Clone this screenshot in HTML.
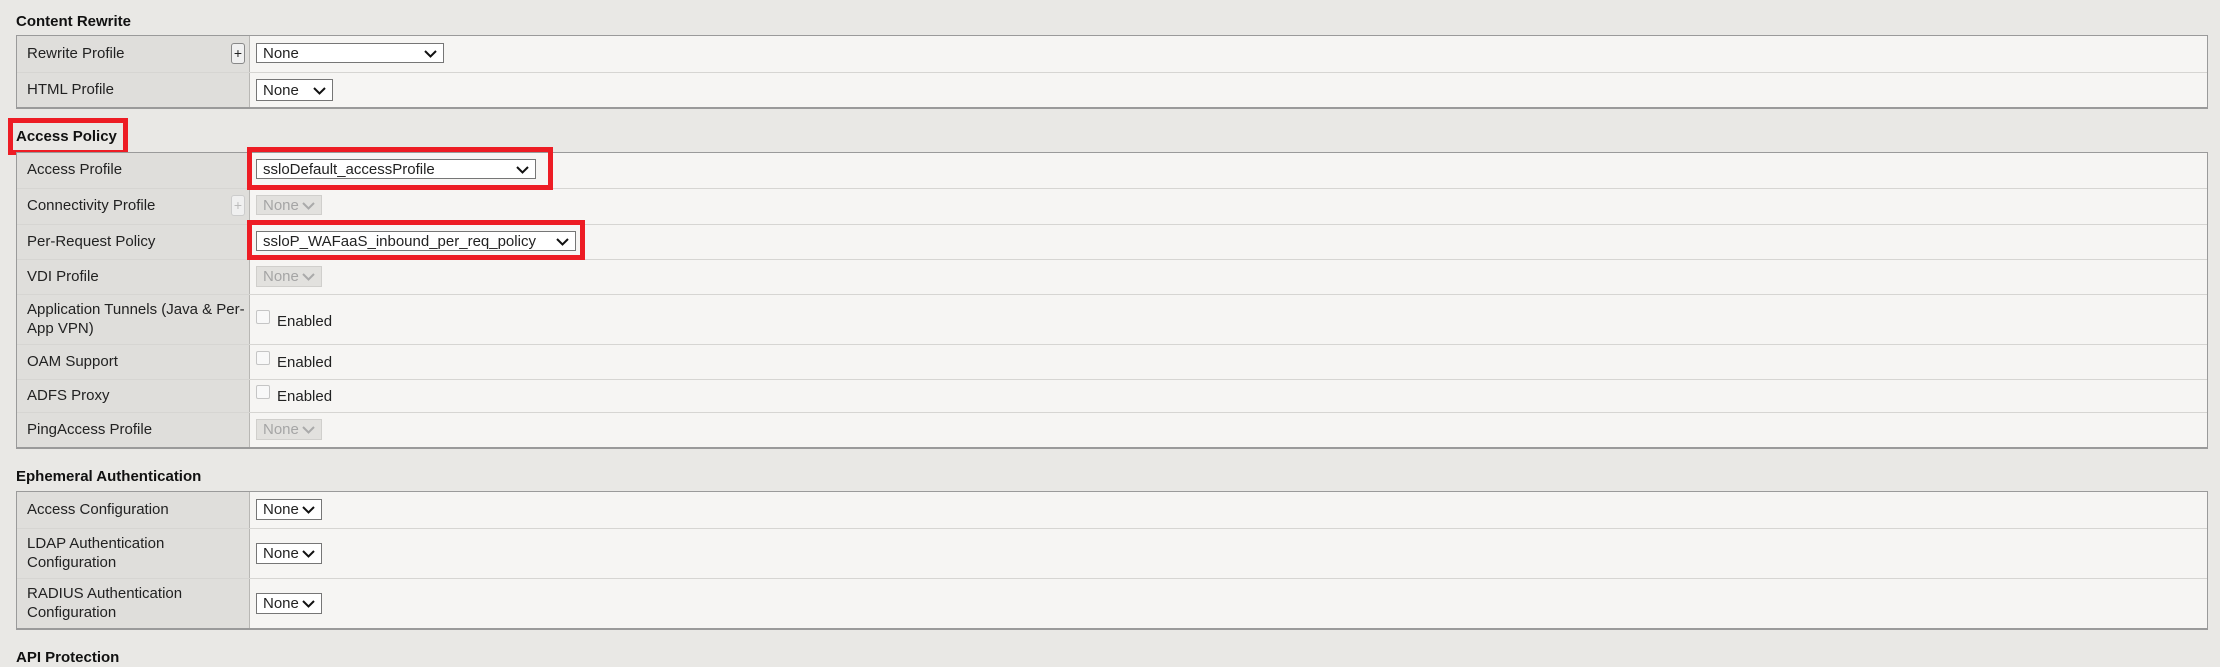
<!DOCTYPE html>
<html><head><meta charset="utf-8"><style>
*{box-sizing:border-box;margin:0;padding:0}
body{width:2220px;height:653px;background:#e9e8e5;font-family:"Liberation Sans",Arial,sans-serif;font-size:15px;color:#222;position:relative;overflow:hidden}
.a{position:absolute}
.h{font-weight:bold;color:#111;font-size:15px;line-height:18px}
.tbl{position:absolute;left:16px;width:2192px;border:1px solid #9a9a9a;border-bottom:2px solid #9a9a9a;background:#f6f5f3}
.row{position:relative;border-top:1px solid #d6d5d2}
.row:first-child{border-top:none}
.lab{position:absolute;left:0;top:0;bottom:0;width:233px;background:#dfdedb;border-right:1px solid #b8b7b4;padding-left:10px;display:flex;align-items:center;line-height:19px;white-space:nowrap;padding-bottom:2px}
.sel{position:absolute;left:239px;height:20px;border:1px solid #767676;background:#fff;padding-left:6px;padding-top:1px;line-height:18px;font-size:15px;white-space:nowrap}
.sel svg{position:absolute;right:6px;top:6px}
.dis{border-color:#d0cfcc;background:#e2e1de;color:#a5a5a5}
.plus{position:absolute;left:214px;width:14px;height:21px;border:1px solid #888;border-radius:3px;background:#f0f0f0;font-size:14px;text-align:center;line-height:18px}
.plus.d{border-color:#ccc;color:#bbb}
.cb{position:absolute;left:239px;width:14px;height:14px;border:1px solid #c5c5c5;border-radius:2px;background:#f8f8f8}
.en{position:absolute;left:260px}
.red{position:absolute;border:5px solid #ed1c24}
</style></head><body>
<div class="a h" style="left:16px;top:13px">Content Rewrite</div>
<div class="tbl" style="top:35px">
 <div class="row" style="height:36px"><div class="lab">Rewrite Profile</div><div class="plus" style="top:7px">+</div>
  <div class="sel" style="top:7px;width:188px">None<svg width="13" height="8"><path d="M1 1l5.5 5.5L12 1" stroke="#111" stroke-width="2" fill="none"/></svg></div></div>
 <div class="row" style="height:35px"><div class="lab">HTML Profile</div>
  <div class="sel" style="top:6px;width:77px;height:22px;line-height:20px">None<svg width="13" height="8" style="top:7px"><path d="M1 1l5.5 5.5L12 1" stroke="#111" stroke-width="2" fill="none"/></svg></div></div>
</div>

<div class="a h" style="left:16px;top:128px">Access Policy</div>
<div class="red" style="left:8px;top:118px;width:120px;height:37px"></div>
<div class="tbl" style="top:152px">
 <div class="row" style="height:35px"><div class="lab">Access Profile</div>
  <div class="sel" style="top:6px;width:280px">ssloDefault_accessProfile<svg width="13" height="8"><path d="M1 1l5.5 5.5L12 1" stroke="#111" stroke-width="2" fill="none"/></svg></div></div>
 <div class="row" style="height:36px"><div class="lab">Connectivity Profile</div><div class="plus d" style="top:6px">+</div>
  <div class="sel dis" style="top:6px;width:66px">None<svg width="13" height="8"><path d="M1 1l5.5 5.5L12 1" stroke="#aaa" stroke-width="2" fill="none"/></svg></div></div>
 <div class="row" style="height:35px"><div class="lab">Per-Request Policy</div>
  <div class="sel" style="top:6px;width:320px">ssloP_WAFaaS_inbound_per_req_policy<svg width="13" height="8"><path d="M1 1l5.5 5.5L12 1" stroke="#111" stroke-width="2" fill="none"/></svg></div></div>
 <div class="row" style="height:35px"><div class="lab">VDI Profile</div>
  <div class="sel dis" style="top:6px;width:66px;height:21px">None<svg width="13" height="8"><path d="M1 1l5.5 5.5L12 1" stroke="#aaa" stroke-width="2" fill="none"/></svg></div></div>
 <div class="row" style="height:50px"><div class="lab">Application Tunnels (Java &amp; Per-<br>App VPN)</div>
  <div class="cb" style="top:15px"></div><div class="en" style="top:18px">Enabled</div></div>
 <div class="row" style="height:35px"><div class="lab">OAM Support</div>
  <div class="cb" style="top:6px"></div><div class="en" style="top:9px">Enabled</div></div>
 <div class="row" style="height:33px"><div class="lab">ADFS Proxy</div>
  <div class="cb" style="top:5px"></div><div class="en" style="top:8px">Enabled</div></div>
 <div class="row" style="height:35px"><div class="lab">PingAccess Profile</div>
  <div class="sel dis" style="top:6px;width:66px;height:21px">None<svg width="13" height="8"><path d="M1 1l5.5 5.5L12 1" stroke="#aaa" stroke-width="2" fill="none"/></svg></div></div>
</div>
<div class="red" style="left:247px;top:147px;width:306px;height:43px"></div>
<div class="red" style="left:247px;top:220px;width:338px;height:40px"></div>

<div class="a h" style="left:16px;top:468px">Ephemeral Authentication</div>
<div class="tbl" style="top:491px">
 <div class="row" style="height:36px"><div class="lab">Access Configuration</div>
  <div class="sel" style="top:7px;width:66px;height:21px">None<svg width="13" height="8"><path d="M1 1l5.5 5.5L12 1" stroke="#111" stroke-width="2" fill="none"/></svg></div></div>
 <div class="row" style="height:50px"><div class="lab">LDAP Authentication<br>Configuration</div>
  <div class="sel" style="top:14px;width:66px;height:21px">None<svg width="13" height="8"><path d="M1 1l5.5 5.5L12 1" stroke="#111" stroke-width="2" fill="none"/></svg></div></div>
 <div class="row" style="height:50px"><div class="lab">RADIUS Authentication<br>Configuration</div>
  <div class="sel" style="top:14px;width:66px;height:21px">None<svg width="13" height="8"><path d="M1 1l5.5 5.5L12 1" stroke="#111" stroke-width="2" fill="none"/></svg></div></div>
</div>
<div class="a h" style="left:16px;top:649px">API Protection</div>
</body></html>
